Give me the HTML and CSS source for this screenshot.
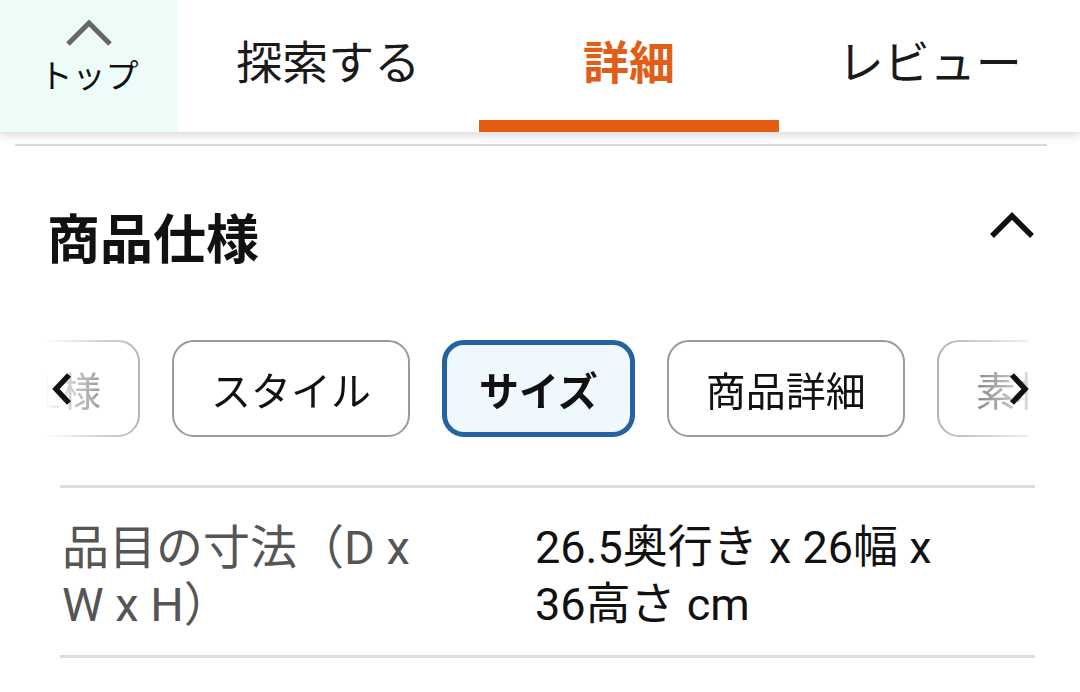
FILE: index.html
```html
<!DOCTYPE html>
<html lang="ja">
<head>
<meta charset="utf-8">
<link rel="stylesheet" href="styles.css">
</head>
<body>
<header class="topbar">
  <div class="top-btn">
    <svg class="top-chev" width="50" height="32" viewBox="0 0 50 32"><path d="M4 28 L25 7 L46 28" fill="none" stroke="#666" stroke-width="5"/></svg>
    <span class="top-label">トップ</span>
  </div>
  <nav class="tabs">
    <div class="tab">探索する</div>
    <div class="tab active">詳細</div>
    <div class="tab">レビュー</div>
  </nav>
</header>

<section class="spec">
  <div class="spec-head">
    <h2 class="spec-title">商品仕様</h2>
    <svg class="spec-chev" width="46" height="32" viewBox="0 0 46 32"><path d="M3 27 L23 7 L43 27" fill="none" stroke="#111" stroke-width="5.5"/></svg>
  </div>

  <div class="chips-wrap">
    <div class="chips">
      <div class="chip first">仕様</div>
      <div class="chip">スタイル</div>
      <div class="chip selected">サイズ</div>
      <div class="chip">商品詳細</div>
      <div class="chip">素材</div>
    </div>
    <svg class="arrow arrow-left" width="24" height="34" viewBox="0 0 24 34"><path d="M19 3 L6 17 L19 31" fill="none" stroke="#111" stroke-width="5.5"/></svg>
    <svg class="arrow arrow-right" width="24" height="34" viewBox="0 0 24 34"><path d="M5 3 L18 17 L5 31" fill="none" stroke="#111" stroke-width="5.5"/></svg>
  </div>

  <div class="table">
    <div class="row">
      <div class="label">品目の寸法（D x W x H）</div>
      <div class="value">26.5奥行き x 26幅 x 36高さ cm</div>
    </div>
  </div>
</section>
</body>
</html>
```

FILE: styles.css
```css
* { box-sizing: border-box; }
html, body { margin: 0; padding: 0; background: #fff; }
body {
  width: 1080px;
  height: 692px;
  overflow: hidden;
  font-family: Roboto, "Noto Sans CJK JP", sans-serif;
  color: #111;
}

.topbar {
  display: flex;
  height: 132px;
  background: #fff;
  box-shadow: 0 3px 9px rgba(0,0,0,0.16);
  position: relative;
  z-index: 2;
}
.top-btn {
  width: 178px;
  background: #eefcf9;
  display: flex;
  flex-direction: column;
  align-items: center;
  padding-top: 16px;
}
.top-chev { display: block; }
.top-label {
  font-family: "Noto Sans CJK JP", sans-serif;
  font-size: 33px;
  line-height: 40px;
  margin-top: 6px;
  color: #111;
}
.tabs { flex: 1; display: flex; }
.tab {
  flex: 1;
  display: flex;
  align-items: center;
  justify-content: center;
  font-family: "Noto Sans CJK JP", sans-serif;
  font-size: 46px;
  color: #1a1a1a;
  border-bottom: 12px solid transparent;
  padding-bottom: 2px;
}
.tab.active {
  color: #e05e18;
  font-weight: 700;
  border-bottom-color: #e35d12;
}

.spec {
  margin: 12px 33px 0 15px;
  border-top: 2px solid #d7dada;
}
.spec-head {
  height: 182px;
  display: flex;
  align-items: center;
  justify-content: space-between;
  padding: 0 12px 0 32px;
}
.spec-title {
  margin: 0;
  font-family: "Noto Sans CJK JP", sans-serif;
  font-size: 53px;
  font-weight: 700;
  color: #111;
  padding-bottom: 2px;
}
.spec-chev { display: block; margin-top: -24px; }

.chips-wrap {
  position: relative;
  margin: 12px 19px 0 30px;
  height: 97px;
}
.chips {
  display: flex;
  gap: 32px;
  height: 97px;
  overflow: hidden;
  -webkit-mask-image: linear-gradient(to right, rgba(0,0,0,0) 0, #000 130px, #000 calc(100% - 125px), rgba(0,0,0,0.15) 100%);
  mask-image: linear-gradient(to right, rgba(0,0,0,0) 0, #000 130px, #000 calc(100% - 125px), rgba(0,0,0,0.15) 100%);
}
.chip {
  flex: none;
  height: 97px;
  display: flex;
  align-items: center;
  padding: 0 37px;
  border: 2px solid #9a9a9a;
  border-radius: 22px;
  font-family: "Noto Sans CJK JP", sans-serif;
  font-size: 40px;
  color: #111;
  background: #fff;
}
.chip.first { margin-left: -63px; }
.chip.selected {
  border: 5px solid #2563a0;
  background: #eef8fd;
  font-weight: 700;
  padding: 0 32px;
}
.arrow { position: absolute; top: 32px; }
.arrow-left { left: 5px; }
.arrow-right { right: -3px; }

.table {
  margin: 48px 12px 0 45px;
  border-top: 3px solid #dcdede;
}
.row {
  display: grid;
  grid-template-columns: 380px 420px;
  column-gap: 93px;
  padding: 31px 0 22px 2px;
  border-bottom: 3px solid #dcdede;
  font-size: 45px;
  line-height: 57px;
}
.label { color: #555; font-size: 47px; }
.value { color: #111; }
```
